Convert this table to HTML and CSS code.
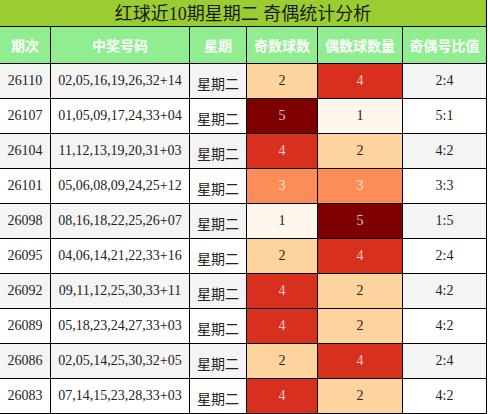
FILE: index.html
```html
<!DOCTYPE html>
<html>
<head>
<meta charset="utf-8">
<link rel="stylesheet" href="styles.css">
</head>
<body>
<div class="board">
  <div class="title">红球近10期星期二 奇偶统计分析</div>
  <div class="grid">
    <div class="cell head">期次</div>
    <div class="cell head">中奖号码</div>
    <div class="cell head">星期</div>
    <div class="cell head">奇数球数</div>
    <div class="cell head">偶数球数量</div>
    <div class="cell head">奇偶号比值</div>

    <div class="cell g">26110</div><div class="cell g">02,05,16,19,26,32+14</div><div class="cell g cjk">星期二</div><div class="cell v2">2</div><div class="cell v4">4</div><div class="cell g">2:4</div>
    <div class="cell">26107</div><div class="cell">01,05,09,17,24,33+04</div><div class="cell cjk">星期二</div><div class="cell v5">5</div><div class="cell v1">1</div><div class="cell">5:1</div>
    <div class="cell g">26104</div><div class="cell g">11,12,13,19,20,31+03</div><div class="cell g cjk">星期二</div><div class="cell v4">4</div><div class="cell v2">2</div><div class="cell g">4:2</div>
    <div class="cell">26101</div><div class="cell">05,06,08,09,24,25+12</div><div class="cell cjk">星期二</div><div class="cell v3">3</div><div class="cell v3">3</div><div class="cell">3:3</div>
    <div class="cell g">26098</div><div class="cell g">08,16,18,22,25,26+07</div><div class="cell g cjk">星期二</div><div class="cell v1">1</div><div class="cell v5">5</div><div class="cell g">1:5</div>
    <div class="cell">26095</div><div class="cell">04,06,14,21,22,33+16</div><div class="cell cjk">星期二</div><div class="cell v2">2</div><div class="cell v4">4</div><div class="cell">2:4</div>
    <div class="cell g">26092</div><div class="cell g">09,11,12,25,30,33+11</div><div class="cell g cjk">星期二</div><div class="cell v4">4</div><div class="cell v2">2</div><div class="cell g">4:2</div>
    <div class="cell">26089</div><div class="cell">05,18,23,24,27,33+03</div><div class="cell cjk">星期二</div><div class="cell v4">4</div><div class="cell v2">2</div><div class="cell">4:2</div>
    <div class="cell g">26086</div><div class="cell g">02,05,14,25,30,32+05</div><div class="cell g cjk">星期二</div><div class="cell v2">2</div><div class="cell v4">4</div><div class="cell g">2:4</div>
    <div class="cell">26083</div><div class="cell">07,14,15,23,28,33+03</div><div class="cell cjk">星期二</div><div class="cell v4">4</div><div class="cell v2">2</div><div class="cell">4:2</div>
  </div>
</div>
</body>
</html>
```
FILE: styles.css
```css
html, body {
  margin: 0;
  padding: 0;
  background: #ffffff;
}
.board {
  width: 487px;
  font-family: "Liberation Serif", "Noto Sans CJK SC", serif;
  color: #222222;
}
.title {
  box-sizing: border-box;
  height: 27px;
  background: #9acd32;
  border-right: 1px solid #000;
  border-bottom: 1px solid #000;
  display: flex;
  align-items: center;
  justify-content: center;
  font-size: 18px;
  color: #1a1a1a;
  line-height: 1;
  padding-top: 1px;
}
.grid {
  display: grid;
  grid-template-columns: 51px 139px 57px 71px 85px 84px;
  grid-template-rows: 37px repeat(10, 35px);
}
.cell {
  box-sizing: border-box;
  border-right: 1px solid #000;
  border-bottom: 1px solid #000;
  display: flex;
  align-items: center;
  justify-content: center;
  font-size: 14px;
  background: #ffffff;
  white-space: nowrap;
  line-height: 1;
}
.head {
  background: #90ee90;
  color: #ffffff;
  font-weight: bold;
  font-family: "Noto Sans CJK SC", sans-serif;
  font-size: 14px;
}
.cjk {
  font-family: "Noto Sans CJK SC", sans-serif;
  font-size: 14px;
  padding-top: 3px;
}
.g { background: #f4f4f4; }
.v1 { background: #fff7ec; }
.v2 { background: #fdd49e; }
.v3 { background: #fc8d59; color: #fde3d4; }
.v4 { background: #d7301f; color: #f7cdc6; }
.v5 { background: #7f0000; color: #e6c4c4; }
```
